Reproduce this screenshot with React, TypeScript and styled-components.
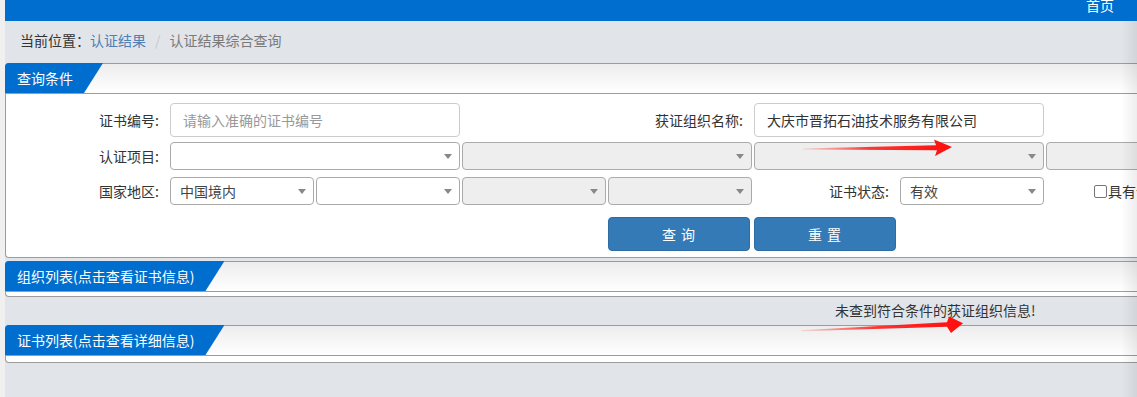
import React from "react";
import styled, { createGlobalStyle } from "styled-components";

const GlobalStyle = createGlobalStyle`
  html, body {
    margin: 0;
    padding: 0;
    overflow: hidden;
    background: #f0f0f0;
  }
  * { box-sizing: border-box; }
`;

const FONT = `"Microsoft YaHei", "Noto Sans CJK SC", "Liberation Sans", sans-serif`;

const Page = styled.div`
  position: relative;
  width: 1137px;
  height: 397px;
  padding-left: 5px;
  background: #f0f0f0;
  font-family: ${FONT};
  font-size: 14px;
  color: #333;
  overflow: hidden;
`;

const Main = styled.div`
  height: 100%;
  background: #e1e5ea;
  display: flex;
  flex-direction: column;
`;

const TopBar = styled.div`
  height: 21px;
  flex: none;
  background: #006ecf;
  display: flex;
  justify-content: flex-end;
  padding-right: 23px;
  overflow: hidden;
`;

const TopLink = styled.a`
  color: #fff;
  font-size: 14px;
  line-height: 14px;
  margin-top: -2px;
`;

const Crumbs = styled.div`
  height: 42px;
  flex: none;
  display: flex;
  align-items: center;
  padding: 0 0 4px 15px;
  line-height: 16px;
`;

const CrumbLink = styled.span<{ $current?: boolean }>`
  color: ${(p) => (p.$current ? "#7a7a7a" : "#4f7fb4")};
`;

const CrumbSep = styled.span`
  color: #c8c8c8;
  margin: 0 9px;
`;

const Panel = styled.section`
  flex: none;
  background: #fff;
  border: 1px solid #9c9c9c;
  border-right: none;
  border-radius: 4px 0 0 4px;
`;

const PanelHead = styled.div`
  height: 30px;
  background: linear-gradient(#ededed, #ffffff);
  border-bottom: 1px solid #9c9c9c;
  display: flex;
`;

const Tab = styled.div`
  height: 30px;
  margin: -1px 0 0 -1px;
  padding: 0 30px 0 12px;
  background: #006ecf;
  color: #fff;
  line-height: 30px;
  font-size: 14px;
  border-radius: 4px 0 0 0;
  clip-path: polygon(0 0, 100% 0, calc(100% - 19px) 100%, 0 100%);
`;

const PanelBody = styled.div<{ $h?: number }>`
  height: ${(p) => (p.$h != null ? `${p.$h}px` : "auto")};
  overflow: hidden;
`;

const Form = styled.div`
  display: grid;
  grid-template-columns: repeat(8, 144px);
  column-gap: 2px;
  padding: 9px 0 6px 18px;
`;

const Row = styled.div<{ $gap: number; $h: number }>`
  display: contents;
  & > * {
    margin-top: ${(p) => p.$gap}px;
    height: ${(p) => p.$h}px;
  }
`;

const Label = styled.div<{ $span?: number }>`
  grid-column: span ${(p) => p.$span ?? 1};
  display: flex;
  align-items: center;
  justify-content: flex-end;
  padding-right: 9px;
  color: #333;
  white-space: nowrap;
`;

const TextInput = styled.div<{ $placeholder?: boolean }>`
  grid-column: span 2;
  border: 1px solid #cccccc;
  border-radius: 4px;
  display: flex;
  align-items: center;
  padding-left: 12px;
  color: ${(p) => (p.$placeholder ? "#999" : "#333")};
  background: #fff;
`;

const Select = styled.div<{ $span?: number; $disabled?: boolean }>`
  grid-column: span ${(p) => p.$span ?? 1};
  position: relative;
  border: 1px solid #aaaaaa;
  border-radius: 4px;
  background: ${(p) => (p.$disabled ? "#eeeeee" : "#fff")};
  display: flex;
  align-items: center;
  padding-left: 9px;
  color: #444;
  &::after {
    content: "";
    position: absolute;
    right: 7px;
    top: 50%;
    margin-top: -2px;
    border-style: solid;
    border-width: 5px 4px 0 4px;
    border-color: #888 transparent transparent transparent;
  }
`;

const CheckWrap = styled.label`
  display: flex;
  align-items: center;
  padding-left: 48px;
  white-space: nowrap;
  color: #333;
`;

const Box = styled.span`
  width: 13px;
  height: 13px;
  border: 1px solid #767676;
  border-radius: 2px;
  background: #fff;
  margin-right: 1px;
  flex: none;
`;

const Spacer = styled.div<{ $span: number }>`
  grid-column: span ${(p) => p.$span};
`;

const Button = styled.button`
  width: 142px;
  border: 1px solid #2e6da4;
  border-radius: 4px;
  background: #337ab7;
  color: #fff;
  font-family: ${FONT};
  font-size: 14px;
  padding: 0;
  letter-spacing: 1px;
`;

const Gap = styled.div<{ $h: number }>`
  height: ${(p) => p.$h}px;
  flex: none;
`;

const Message = styled.div`
  height: 28px;
  flex: none;
  line-height: 26px;
  padding-left: 830px;
  color: #333;
  white-space: nowrap;
`;

const EdgeShade = styled.div`
  position: absolute;
  top: 21px;
  right: 0;
  bottom: 0;
  width: 16px;
  background: linear-gradient(to right, rgba(0, 0, 0, 0), rgba(0, 0, 0, 0.07));
  pointer-events: none;
`;

const Annotations = styled.svg`
  position: absolute;
  left: 0;
  top: 0;
  pointer-events: none;
`;

const App: React.FC = () => {
  return (
    <Page>
      <GlobalStyle />
      <Main>
        <TopBar>
          <TopLink>首页</TopLink>
        </TopBar>
        <Crumbs>
          <span>当前位置：</span>
          <CrumbLink>认证结果</CrumbLink>
          <CrumbSep>/</CrumbSep>
          <CrumbLink $current>认证结果综合查询</CrumbLink>
        </Crumbs>

        <Panel>
          <PanelHead>
            <Tab>查询条件</Tab>
          </PanelHead>
          <PanelBody>
            <Form>
              <Row $gap={0} $h={34}>
                <Label>证书编号:</Label>
                <TextInput $placeholder>请输入准确的证书编号</TextInput>
                <Label $span={2}>获证组织名称:</Label>
                <TextInput>大庆市晋拓石油技术服务有限公司</TextInput>
                <Spacer $span={1} />
              </Row>
              <Row $gap={5} $h={28}>
                <Label>认证项目:</Label>
                <Select $span={2} />
                <Select $span={2} $disabled />
                <Select $span={2} $disabled />
                <Select $span={1} $disabled />
              </Row>
              <Row $gap={7} $h={28}>
                <Label>国家地区:</Label>
                <Select>中国境内</Select>
                <Select />
                <Select $disabled />
                <Select $disabled />
                <Label>证书状态:</Label>
                <Select>有效</Select>
                <CheckWrap>
                  <Box />
                  具有认可标识
                </CheckWrap>
              </Row>
              <Row $gap={12} $h={34}>
                <Spacer $span={4} />
                <Button>查 询</Button>
                <Button>重 置</Button>
                <Spacer $span={2} />
              </Row>
            </Form>
          </PanelBody>
        </Panel>

        <Gap $h={3} />

        <Panel>
          <PanelHead>
            <Tab>组织列表(点击查看证书信息)</Tab>
          </PanelHead>
          <PanelBody $h={4} />
        </Panel>

        <Message>未查到符合条件的获证组织信息!</Message>

        <Panel>
          <PanelHead>
            <Tab>证书列表(点击查看详细信息)</Tab>
          </PanelHead>
          <PanelBody $h={6} />
        </Panel>
      </Main>

      <EdgeShade />

      <Annotations width="1137" height="397" viewBox="0 0 1137 397">
        <defs>
          <linearGradient id="arrowFade" x1="0" y1="0" x2="1" y2="0">
            <stop offset="0" stopColor="#ff3b3b" stopOpacity="0.15" />
            <stop offset="0.45" stopColor="#ff2020" stopOpacity="0.9" />
            <stop offset="1" stopColor="#ff0d0d" />
          </linearGradient>
        </defs>
        <polygon
          fill="url(#arrowFade)"
          points="803,148.6 936,145.3 934,139.5 952,147 935,156 937,150.3 803,149.6"
        />
        <polygon
          fill="url(#arrowFade)"
          points="801,330.3 947,322.3 949,316.5 963,323.3 951,333 947,326.8 801,331.3"
        />
      </Annotations>
    </Page>
  );
};

export default App;
